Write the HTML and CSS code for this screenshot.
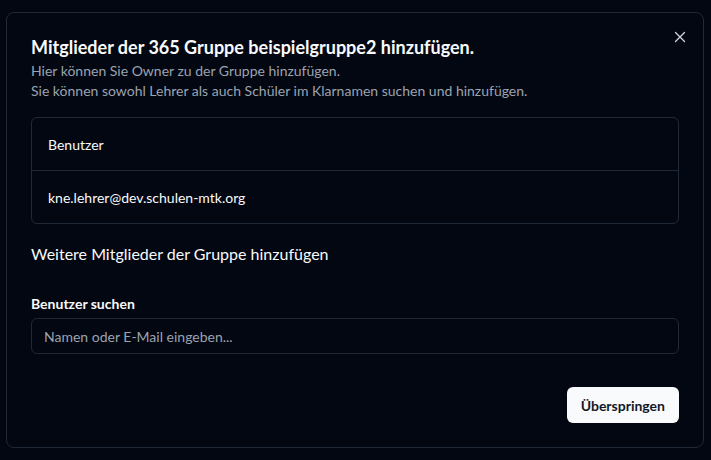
FILE: index.html
```html
<!DOCTYPE html>
<html lang="de">
<head>
  <meta charset="UTF-8" />
  <meta name="viewport" content="width=device-width, initial-scale=1.0" />
  <title>Mitglieder hinzufügen</title>
  <link rel="stylesheet" href="styles.css">
</head>
<body>

  <div class="dialog">
    <button class="close" aria-label="Schließen">
      <svg width="12" height="12" viewBox="0 0 12 12" fill="none" stroke="currentColor" stroke-width="1.3" stroke-linecap="round">
        <path d="M1.5 1.5l9 9M10.5 1.5l-9 9" />
      </svg>
    </button>

    <div class="dialog-header">
      <h2>Mitglieder der 365 Gruppe beispielgruppe2 hinzufügen.</h2>
      <p>Hier können Sie Owner zu der Gruppe hinzufügen.<br>Sie können sowohl Lehrer als auch Schüler im Klarnamen suchen und hinzufügen.</p>
    </div>

    <div class="table">
      <div class="row head">Benutzer</div>
      <div class="row">kne.lehrer@dev.schulen-mtk.org</div>
    </div>

    <h3>Weitere Mitglieder der Gruppe hinzufügen</h3>

    <label class="field">
      <span>Benutzer suchen</span>
      <input type="text" placeholder="Namen oder E-Mail eingeben...">
    </label>

    <div class="actions">
      <button class="btn">Überspringen</button>
    </div>
  </div>

</body>
</html>
```

FILE: styles.css
```css
body {
  font-family: Lato, "Noto Sans", sans-serif;
  margin: 0;
  background: #030712;
  color: #f9fafb;
}

.dialog {
  position: relative;
  margin: 12px 7px 12px 6px;
  padding: 20px 24px 24px;
  border: 1px solid #1f2937;
  border-radius: 8px;
  background: #030712;
}

.close {
  position: absolute;
  top: 18px;
  right: 17px;
  padding: 0;
  background: none;
  border: none;
  color: #d1d5db;
  cursor: pointer;
  display: flex;
}

.dialog-header h2 {
  margin: 0;
  font-size: 18px;
  font-weight: 700;
  line-height: 28px;
}

.dialog-header p {
  margin: 0;
  font-size: 14px;
  line-height: 20px;
  color: #9ca3af;
}

.table {
  margin-top: 16px;
  border: 1px solid #1f2937;
  border-radius: 6px;
}

.row {
  height: 52px;
  display: flex;
  align-items: center;
  padding: 0 16px;
  font-size: 14px;
}

.row + .row {
  border-top: 1px solid #1f2937;
}

h3 {
  margin: 18px 0 0;
  font-size: 16px;
  font-weight: 400;
  line-height: 24px;
}

.field {
  display: flex;
  flex-direction: column;
  gap: 4px;
  margin-top: 28px;
}

.field span {
  font-size: 14px;
  font-weight: 700;
  line-height: 20px;
}

.field input {
  height: 36px;
  box-sizing: border-box;
  padding: 0 12px;
  background: transparent;
  border: 1px solid #1f2937;
  border-radius: 6px;
  color: #f9fafb;
  font: inherit;
  font-size: 14px;
}

.field input::placeholder {
  color: #9ca3af;
}

.actions {
  display: flex;
  justify-content: flex-end;
  margin-top: 33px;
}

.btn {
  height: 36px;
  padding: 0 14px;
  background: #f9fafb;
  color: #111827;
  border: none;
  border-radius: 6px;
  font: inherit;
  font-size: 14px;
  font-weight: 700;
  cursor: pointer;
}
```
